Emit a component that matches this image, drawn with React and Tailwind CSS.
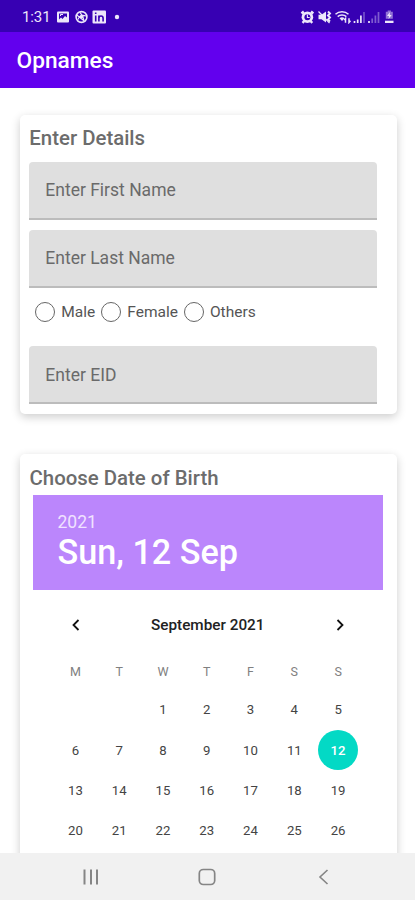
import { useState } from "react";

const weekDays = ["M", "T", "W", "T", "F", "S", "S"];
const firstDayOffset = 2;
const genders = ["Male", "Female", "Others"];

function StatusBar() {
  return (
    <div className="flex h-8 shrink-0 items-center bg-[#3700b3] pt-[2px] pl-[22px] pr-[19px] text-[#ece6fa]">
      <span className="w-[34px] text-[15px] leading-none tracking-[-0.1px]">1:31</span>
      <svg width="66" height="14" viewBox="0 0 66 14" fill="none">
        <rect x="1" y="1.5" width="12" height="11" rx="1" fill="currentColor" />
        <path d="M3 3.5h8v4l-2-1.5-2.5 3L5 7.5 3 9.5z" fill="#3700b3" />
        <path d="M4.5 6V4.5H7" stroke="currentColor" />
        <circle cx="25.5" cy="7" r="5.4" stroke="currentColor" strokeWidth="1.6" />
        <path d="M20.8 5l7.5 6M22 9.5c1-4 4-5 8-3.5M24 2.5c2 2 3.5 5 4 8" stroke="currentColor" strokeWidth="1.1" />
        <circle cx="25.5" cy="6.8" r="1.8" fill="currentColor" />
        <rect x="36.5" y="0.5" width="13.5" height="13" rx="1" fill="currentColor" />
        <path d="M39.7 5.5v6M39.7 2.5v1.6M42.9 11.5v-6M42.9 8.2c0-3 4.2-3 4.2 0v3.3" stroke="#3700b3" strokeWidth="1.6" />
        <circle cx="61" cy="7" r="2.2" fill="currentColor" />
      </svg>
      <svg className="ml-auto" width="96" height="14" viewBox="0 0 96 14" fill="none">
        {/* alarm */}
        <circle cx="7.4" cy="7.2" r="5.8" fill="currentColor" />
        <path d="M1.5 3.5l2.3-2M13.3 3.5l-2.3-2M2.5 12.8l1.8-1.8M12.3 12.8L10.5 11" stroke="currentColor" strokeWidth="2.4" />
        <circle cx="7.4" cy="7.2" r="3" fill="#3700b3" />
        <path d="M7.4 4.5v3h2.3" stroke="currentColor" strokeWidth="1.1" />
        {/* vibrate / muted */}
        <path d="M18.5 4.8h3l4.5-3.3v11L21.5 9.3h-3z" fill="currentColor" />
        <path d="M18.5 1.5l11 11.5" stroke="currentColor" strokeWidth="1.2" />
        <path d="M28 1.5l2 2-2 2 2 2-2 2 2 2" stroke="currentColor" strokeWidth="1.9" />
        {/* wifi */}
        <path d="M35.5 4.2c3.6-3.4 9.4-3.4 13 0M37.7 6.6c2.3-2.2 6.3-2.2 8.6 0" stroke="currentColor" strokeWidth="1.5" />
        <path d="M39.5 8.2c1.4-1.3 3.6-1.3 5 0L42 11z" fill="currentColor" />
        <path d="M45.5 12.8V8.5l-1.3 1.5M49 8.2v4.3l1.5-1.7" stroke="currentColor" strokeWidth="1.5" />
        {/* signal */}
        <path d="M54.5 13v-2M57.7 13V9.5M60.9 13V5.5" stroke="currentColor" strokeWidth="1.7" />
        <path d="M64 13V2" stroke="currentColor" strokeWidth="1.7" opacity=".35" />
        <path d="M69 13v-2" stroke="currentColor" strokeWidth="1.7" />
        <path d="M72.2 13V8.5M75.4 13V5.5M78.5 13V2" stroke="currentColor" strokeWidth="1.7" opacity=".4" />
        {/* battery */}
        <path d="M85.8 1.8h1.9V.6h3.2v1.2h1.9v7h-7z" fill="currentColor" opacity=".5" />
        <path d="M90 2l-3 4h2l-.5 3 3.2-4h-2z" fill="currentColor" />
        <path d="M85 10.7h8.5V13H85z" fill="currentColor" />
      </svg>
    </div>
  );
}

function Field({ label }) {
  return (
    <input
      type="text"
      placeholder={label}
      className="block h-[58px] w-[348px] rounded-t border-b-2 border-[#bcbcbc] bg-[#dfdfdf] px-4 pt-[1px] text-[17.5px] text-[#6a6a6a] outline-none placeholder:text-[#6a6a6a]"
    />
  );
}

function Calendar({ selected, onSelect }) {
  return (
    <div className="ml-[34px] w-[306.5px]">
      <div className="flex h-[70px] items-center justify-between pr-[14px] pl-4">
        <button type="button" aria-label="Previous month">
          <svg width="12" height="14" viewBox="0 0 12 14" fill="none" stroke="#111" strokeWidth="1.8">
            <path d="M8.5 2L3.5 7l5 5" />
          </svg>
        </button>
        <span className="pt-[1px] text-[15.3px] font-medium text-[#222]">September 2021</span>
        <button type="button" aria-label="Next month">
          <svg width="12" height="14" viewBox="0 0 12 14" fill="none" stroke="#111" strokeWidth="1.8">
            <path d="M3.5 2l5 5-5 5" />
          </svg>
        </button>
      </div>
      <div className="grid grid-cols-7 text-center text-[13.2px] text-[#444]">
        {weekDays.map((day, i) => (
          <span key={i} className="flex h-[30px] items-center justify-center pb-[5px] text-[12.5px] text-[#808080]">
            {day}
          </span>
        ))}
        {Array.from({ length: 26 }, (_, i) => i + 1).map((day) => (
          <button
            key={day}
            type="button"
            onClick={() => onSelect(day)}
            style={day === 1 ? { gridColumnStart: firstDayOffset + 1 } : undefined}
            className="flex h-[40.3px] items-center justify-center"
          >
            <span
              className={
                day === selected
                  ? "flex size-10 items-center justify-center rounded-full bg-[#03d9c5] font-medium text-white"
                  : ""
              }
            >
              {day}
            </span>
          </button>
        ))}
      </div>
    </div>
  );
}

function NavBar() {
  return (
    <div className="flex h-[47px] shrink-0 items-center justify-between bg-[#f1f1f1] pl-[82px] pr-[83px] text-[#858585]">
      <svg width="18" height="18" viewBox="0 0 18 18" stroke="currentColor" strokeWidth="2">
        <path d="M2.5 1.5v15M9 1.5v15M15 1.5v15" />
      </svg>
      <svg width="18" height="18" viewBox="0 0 18 18" fill="none" stroke="currentColor" strokeWidth="1.7">
        <rect x="1.3" y="1.5" width="15.4" height="15" rx="4" />
      </svg>
      <svg width="18" height="18" viewBox="0 0 18 18" fill="none" stroke="currentColor" strokeWidth="1.6">
        <path d="M13.5 2L6 9l7.5 7" />
      </svg>
    </div>
  );
}

export default function App() {
  const [gender, setGender] = useState("");
  const [day, setDay] = useState(12);

  return (
    <div className="flex h-[900px] w-[415px] flex-col overflow-hidden bg-white font-['Roboto',sans-serif]">
      <StatusBar />
      <header className="flex h-[56px] shrink-0 items-center bg-[#6200ee] pt-[3px] pl-[16.5px]">
        <h1 className="text-[22.7px] font-medium text-white">Opnames</h1>
      </header>

      <main className="min-h-0 flex-1 overflow-hidden pt-[27px] pr-[18.5px] pl-[19.5px]">
        <section className="h-[299px] rounded-[5px] bg-white pl-[9.8px] pt-[8px] shadow-[0_3px_10px_rgba(0,0,0,0.2)]">
          <h2 className="text-[20.4px] leading-[30px] font-medium text-[#6c6c6c]">Enter Details</h2>
          <div className="mt-[8.5px] space-y-[10px]">
            <Field label="Enter First Name" />
            <Field label="Enter Last Name" />
          </div>
          <div className="flex h-[58.5px] pl-[6px] pt-[14px]">
            {genders.map((g) => (
              <label key={g} className="mr-[6px] flex h-5 items-center text-[15.5px] text-[#555]">
                <input
                  type="radio"
                  name="gender"
                  checked={gender === g}
                  onChange={() => setGender(g)}
                  className="mr-[6px] size-5 appearance-none rounded-full border-[1.5px] border-[#666] checked:border-[6px] checked:border-[#03d9c5]"
                />
                <span className="pt-[2px]">{g}</span>
              </label>
            ))}
          </div>
          <Field label="Enter EID" />
        </section>

        <section className="mt-10 h-[460px] rounded-[5px] bg-white pl-[10px] pt-[9px] shadow-[0_3px_10px_rgba(0,0,0,0.2)]">
          <h2 className="text-[20.4px] leading-[30px] font-medium text-[#6c6c6c]">Choose Date of Birth</h2>
          <div className="ml-[3.5px] mt-[2px] h-[95px] w-[350px] bg-[#bb86fc] pl-[24.5px] pt-[17px]">
            <p className="text-[17.5px] leading-5 text-[#f0e2ff]">2021</p>
            <p className="text-[34.2px] leading-[41px] font-medium text-white">Sun, 12 Sep</p>
          </div>
          <div className="-ml-[10px]">
            <Calendar selected={day} onSelect={setDay} />
          </div>
        </section>
      </main>

      <NavBar />
    </div>
  );
}
